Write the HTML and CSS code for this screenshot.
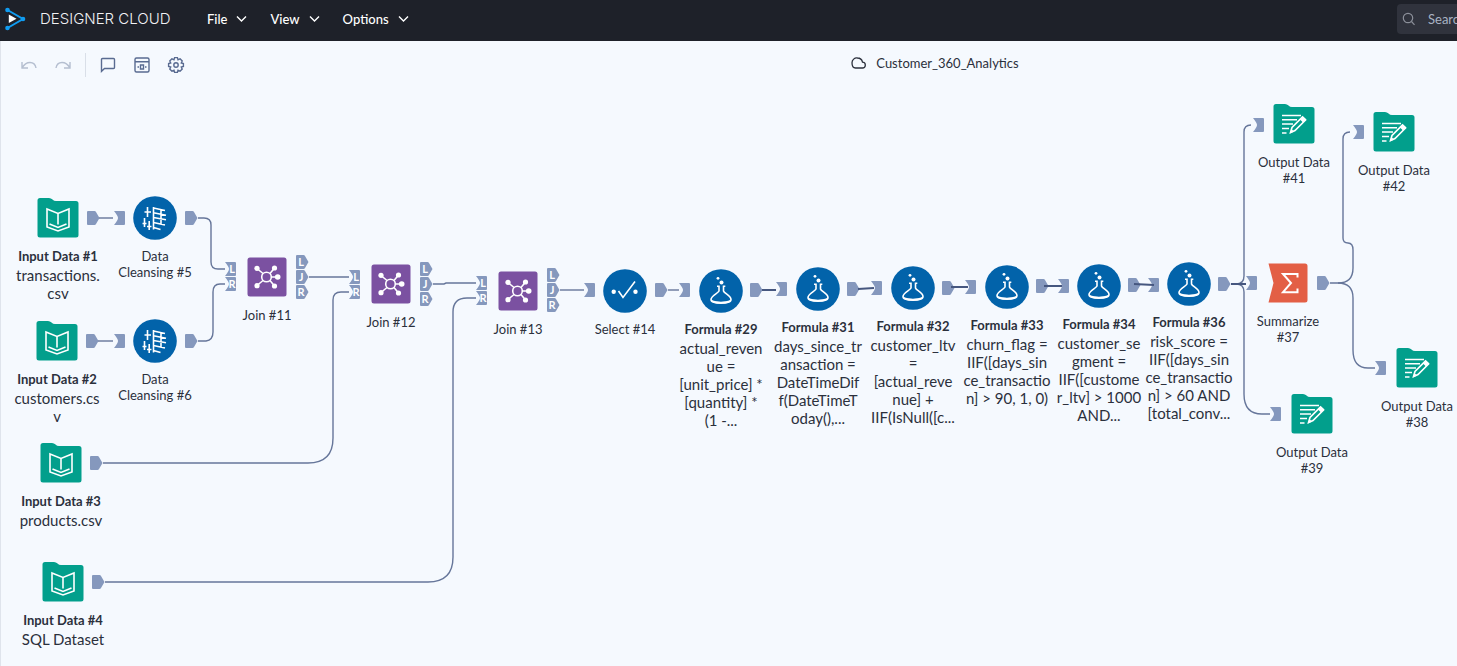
FILE: index.html
```html
<!DOCTYPE html>
<html lang="en">
<head>
<meta charset="utf-8">
<title>Customer_360_Analytics - Designer Cloud</title>
<link rel="stylesheet" href="styles.css">
</head>
<body>
<svg class="defs" aria-hidden="true">
  <defs>
    <path id="chev" d="M1 1.500L5.500 6L10 1.500"/>
    <path id="po" d="M1 -7H7.500Q8.500 -7 9 -6L12.500 0L9 6Q8.500 7 7.500 7H1Q0 7 0 6V-6Q0 -7 1 -7Z"/>
    <path id="pi" d="M0 -7H10Q11 -7 11 -6V6Q11 7 10 7H0Q4 2 4 0Q4 -2 0 -7Z"/>
    <symbol id="input" viewBox="-22 -22 44 44">
      <path class="teal" d="M-18 -20H-9Q-7 -20 -5.500 -18.500Q-4 -17 -2 -17H18Q20.500 -17 20.500 -14.500V17Q20.500 19.500 18 19.500H-18Q-20.500 19.500 -20.500 17V-17.500Q-20.500 -20 -18 -20Z"/>
      <path class="ink" d="M-11 -9L0 -4.500L11 -9V9L0 13L-11 9ZM0 -4.500V6.500M-8.500 6L0 9.500L8.500 6"/>
    </symbol>
    <symbol id="output" viewBox="-22 -22 44 44">
      <path class="teal" d="M-18 -20H-9Q-7 -20 -5.500 -18.500Q-4 -17 -2 -17H18Q20.500 -17 20.500 -14.500V17Q20.500 19.500 18 19.500H-18Q-20.500 19.500 -20.500 17V-17.500Q-20.500 -20 -18 -20Z"/>
      <path class="ink" d="M-12 -8.500H7M-12 -4.300H3M-12 0H-1M-12 4.500H-5M-12 9H-7.500"/>
      <path class="ink" d="M-3.500 8.500L-2 3.500L8.500 -7L11.500 -4L1 6.500Z"/>
      <path class="white" d="M6 -4.500L9 -7.500L12.500 -4.500L9 -1.500ZM-4 9.500L-2.700 5L0 7.500Z"/>
    </symbol>
    <symbol id="clean" viewBox="-22 -22 44 44">
      <circle class="blue" r="21.800"/>
      <path class="ink" d="M-7.500 -11V-1M-10.500 -6H-4M-10.500 0V9M-12.500 5.500H-8.500M-5.800 3V12M-8 8.500H-3.500M-1.500 -11V11.500M6 -8V6.500M-1.500 -10L10 -7.500M-1.500 -5.200L11 -2.800M-1.500 -.5L11 1.800M-1.500 4.500L10 7M-1.500 9.500L5.500 11.500"/>
    </symbol>
    <symbol id="join" viewBox="-22 -22 44 44">
      <rect class="purple" x="-19.500" y="-19.500" width="39" height="39" rx="2.500"/>
      <path class="ink" d="M-4 -3.500L-10 -8.500M3 -3.500L7.500 -9M4 0H10.500M3 3.500L7.500 9M-4 3.500L-10 8.500"/>
      <circle class="ink" cx="-.5" r="4.800"/>
      <g class="white"><circle cx="-10" cy="-8.700" r="2.600"/><circle cx="7.500" cy="-9" r="2.600"/><circle cx="10.700" r="2.800"/><circle cx="7.500" cy="9" r="2.600"/><circle cx="-10" cy="8.700" r="2.600"/></g>
    </symbol>
    <symbol id="select" viewBox="-22 -22 44 44">
      <circle class="blue" r="21.800"/>
      <path class="ink" d="M-6.500 0L-2 6.500L10 -9.500"/>
      <g class="white"><circle cx="-11.300" cy=".7" r="2.200"/><circle cx="10.500" cy=".7" r="2.200"/></g>
    </symbol>
    <symbol id="formula" viewBox="-22 -22 44 44">
      <circle class="blue" r="21.800"/>
      <path class="ink" d="M-4 -4.800H-2V0C-3 2.200 -10 4.800 -10 8.500C-10 11.500 -6 11.800 0 11.800S10 11.500 10 8.500C10 4.800 3 2.200 2.500 0V-4.800H4.300"/>
      <path class="white" d="M-10 9Q0 12.500 10 9Q9 13 0 13T-10 9Z"/>
      <g class="white"><circle cx="-3" cy="-12.700" r="1.400"/><circle cx=".5" cy="-8.400" r="2"/></g>
    </symbol>
    <symbol id="sum" viewBox="-22 -22 44 44">
      <path class="orange" d="M-19.500 -19.500H17Q19.500 -19.500 19.500 -17V17Q19.500 19.500 17 19.500H-19.500L-14.500 0Z"/>
      <path class="sigma" d="M9.500 -5.500V-9H-5L3 0L-5 9.200H9.500V5.500"/>
    </symbol>
  </defs>
</svg>

<header class="topbar">
  <a class="brand" href="#">
    <svg width="22" height="24" viewBox="0 0 22 24" aria-hidden="true">
      <path d="M3.500 3L19 12L3.500 21" fill="none" stroke="#109cf1" stroke-width="2"/>
      <g fill="#109cf1"><circle cx="3.500" cy="3" r="2.300"/><circle cx="19" cy="12" r="2.300"/><circle cx="3.500" cy="21" r="2.300"/></g>
      <path d="M4.800 7.500L12.500 11.800L4.800 16Z" fill="#fff"/>
    </svg>
    <span>DESIGNER CLOUD</span>
  </a>
  <nav class="menus">
    <button class="menu">File <svg width="11" height="8"><use href="#chev"/></svg></button>
    <button class="menu">View <svg width="11" height="8"><use href="#chev"/></svg></button>
    <button class="menu">Options <svg width="11" height="8"><use href="#chev"/></svg></button>
  </nav>
  <label class="search">
    <svg width="14" height="14" viewBox="0 0 14 14" aria-hidden="true"><circle cx="6" cy="6" r="4.700"/><path d="M9.500 9.500L12.500 12.800"/></svg>
    <input type="text" placeholder="Search" aria-label="Search">
  </label>
</header>

<main class="workspace">
  <div class="toolbar">
    <div class="tools">
      <button class="tool off" aria-label="Undo"><svg width="18" height="18" viewBox="0 0 18 18"><path d="M2 6V12H8M2 12C4 8.500 7 6.500 10 6.500C13.500 6.500 15.500 9 16 12"/></svg></button>
      <button class="tool off" aria-label="Redo"><svg width="18" height="18" viewBox="0 0 18 18"><path d="M16 6V12H10M16 12C14 8.500 11 6.500 8 6.500C4.500 6.500 2.500 9 2 12"/></svg></button>
      <span class="rule"></span>
      <button class="tool" aria-label="Comment"><svg width="18" height="18" viewBox="0 0 18 18"><path d="M3.500 2.500H14.500Q15.500 2.500 15.500 3.500V11.500Q15.500 12.500 14.500 12.500H5.500L2.500 15.300V3.500Q2.500 2.500 3.500 2.500Z"/></svg></button>
      <button class="tool" aria-label="Interface designer"><svg width="18" height="18" viewBox="0 0 18 18"><rect x="2" y="2" width="14" height="14" rx="1.500"/><path d="M2 5.800H16M7.500 9H10.500V13H7.500ZM4.500 11H6M12 11H13.500"/></svg></button>
      <button class="tool" aria-label="Settings"><svg width="18" height="18" viewBox="0 0 18 18"><circle cx="9" cy="9" r="2.200"/><path d="M7.600 1.600H10.400L11 3.700L13.100 2.800L15.200 4.900L14.300 7L16.400 7.600V10.400L14.300 11L15.200 13.100L13.100 15.200L11 14.300L10.400 16.400H7.600L7 14.300L4.900 15.200L2.800 13.100L3.700 11L1.600 10.400V7.600L3.700 7L2.800 4.900L4.900 2.800L7 3.700Z"/></svg></button>
    </div>
    <div class="title">
      <svg width="15" height="12" viewBox="0 0 15 12" aria-hidden="true"><path d="M4.500 11H11.200A2.900 2.900 0 0 0 11.500 5.100C11 2.800 9 1 6.500 1A4.800 4.800 0 0 0 1 5.800C1 8.700 2.300 11 4.500 11Z"/></svg>
      <span>Customer_360_Analytics</span>
    </div>
  </div>

  <div class="canvas">
    <svg class="graph" aria-hidden="true">
      <g class="ports">
        <use href="#po" x="87" y="218"/><use href="#pi" x="114" y="218"/><use href="#po" x="185" y="218"/>
        <use href="#po" x="86" y="341"/><use href="#pi" x="114" y="341"/><use href="#po" x="185" y="341"/>
        <use href="#po" x="90" y="463"/><use href="#po" x="92" y="582"/>
        <use href="#pi" x="225" y="269"/><use href="#pi" x="225" y="284"/>
        <use href="#po" x="296" y="262"/><use href="#po" x="296" y="277"/><use href="#po" x="296" y="292"/>
        <use href="#pi" x="349" y="277"/><use href="#pi" x="349" y="292"/>
        <use href="#po" x="420" y="269"/><use href="#po" x="420" y="284"/><use href="#po" x="420" y="299"/>
        <use href="#pi" x="476" y="283"/><use href="#pi" x="476" y="298"/>
        <use href="#po" x="547" y="275"/><use href="#po" x="547" y="290"/><use href="#po" x="547" y="305"/>
        <use href="#pi" x="584" y="290"/><use href="#po" x="655" y="290"/>
        <use href="#pi" x="679" y="290"/><use href="#po" x="750" y="290"/>
        <use href="#pi" x="776" y="289"/><use href="#po" x="847" y="289"/>
        <use href="#pi" x="871" y="288"/><use href="#po" x="942" y="288"/>
        <use href="#pi" x="965" y="287"/><use href="#po" x="1036" y="286"/>
        <use href="#pi" x="1058" y="286"/><use href="#po" x="1128" y="285"/>
        <use href="#pi" x="1148" y="285"/><use href="#po" x="1218" y="284"/>
        <use href="#pi" x="1246" y="283"/><use href="#po" x="1317" y="283"/>
        <use href="#pi" x="1253" y="125"/><use href="#pi" x="1353" y="132"/>
        <use href="#pi" x="1375" y="368"/><use href="#pi" x="1270" y="414"/>
      </g>
      <g class="wires">
        <path d="M99 218H113"/><path d="M98 341H113"/>
        <path d="M198 218H204Q211 218 211 225V262Q211 269 218 269H225"/>
        <path d="M198 341H206Q213 340 213 332V292Q213 284 220 284H225"/>
        <path d="M103 463H308Q333 463 333 438V300Q333 292 341 292H349"/>
        <path d="M105 582H428Q453 582 453 557V312Q453 298 467 298H476"/>
        <path d="M309 277H349"/><path d="M433 284H444L446 283H476"/>
        <path d="M560 290H584"/><path d="M668 290H679"/>
        <path d="M1244 276Q1244 284 1236 284M1244 276V132Q1244 125 1251 125"/>
        <path d="M1236 284Q1244 284 1244 292V394Q1244 414 1262 414H1270"/>
        <path d="M1330 283H1338Q1353 283 1353 268V250Q1353 243 1348 243Q1343 243 1343 238V139Q1343 132 1350 132"/>
        <path d="M1338 283Q1353 283 1353 298V350Q1353 368 1368 368H1375"/>
      </g>
      <g class="wires strong">
        <path d="M762 290L776 290"/><path d="M858 289L874 288"/><path d="M951 287L968 287"/>
        <path d="M1044 286L1062 286"/><path d="M1134 284L1154 285"/><path d="M1231 284L1246 284"/>
      </g>
      <g class="letters">
        <text x="232" y="273">L</text><text x="232" y="288">R</text>
        <text x="301" y="266">L</text><text x="301" y="281">J</text><text x="301" y="296">R</text>
        <text x="356" y="281">L</text><text x="356" y="296">R</text>
        <text x="425" y="273">L</text><text x="425" y="288">J</text><text x="425" y="303">R</text>
        <text x="483" y="287">L</text><text x="483" y="302">R</text>
        <text x="552" y="279">L</text><text x="552" y="294">J</text><text x="552" y="309">R</text>
      </g>
    </svg>

    <div class="node in1"><svg><use href="#input"/></svg><b>Input Data #1</b><p>transactions.<br>csv</p></div>
    <div class="node in2"><svg><use href="#input"/></svg><b>Input Data #2</b><p>customers.cs<br>v</p></div>
    <div class="node in3"><svg><use href="#input"/></svg><b>Input Data #3</b><p>products.csv</p></div>
    <div class="node in4"><svg><use href="#input"/></svg><b>Input Data #4</b><p>SQL Dataset</p></div>
    <div class="node clean5"><svg><use href="#clean"/></svg><span>Data<br>Cleansing #5</span></div>
    <div class="node clean6"><svg><use href="#clean"/></svg><span>Data<br>Cleansing #6</span></div>
    <div class="node join11"><svg><use href="#join"/></svg><span>Join #11</span></div>
    <div class="node join12"><svg><use href="#join"/></svg><span>Join #12</span></div>
    <div class="node join13"><svg><use href="#join"/></svg><span>Join #13</span></div>
    <div class="node select14"><svg><use href="#select"/></svg><span>Select #14</span></div>
    <div class="node f29"><svg><use href="#formula"/></svg><b>Formula #29</b><p>actual_reven<br>ue =<br>[unit_price] *<br>[quantity] *<br>(1 -...</p></div>
    <div class="node f31"><svg><use href="#formula"/></svg><b>Formula #31</b><p>days_since_tr<br>ansaction =<br>DateTimeDif<br>f(DateTimeT<br>oday(),...</p></div>
    <div class="node f32"><svg><use href="#formula"/></svg><b>Formula #32</b><p>customer_ltv<br>=<br>[actual_reve<br>nue] +<br>IIF(IsNull([c...</p></div>
    <div class="node f33"><svg><use href="#formula"/></svg><b>Formula #33</b><p>churn_flag =<br>IIF([days_sin<br>ce_transactio<br>n] &gt; 90, 1, 0)</p></div>
    <div class="node f34"><svg><use href="#formula"/></svg><b>Formula #34</b><p>customer_se<br>gment =<br>IIF([custome<br>r_ltv] &gt; 1000<br>AND...</p></div>
    <div class="node f36"><svg><use href="#formula"/></svg><b>Formula #36</b><p>risk_score =<br>IIF([days_sin<br>ce_transactio<br>n] &gt; 60 AND<br>[total_conv...</p></div>
    <div class="node sum37"><svg><use href="#sum"/></svg><span>Summarize<br>#37</span></div>
    <div class="node out41"><svg><use href="#output"/></svg><span>Output Data<br>#41</span></div>
    <div class="node out42"><svg><use href="#output"/></svg><span>Output Data<br>#42</span></div>
    <div class="node out38"><svg><use href="#output"/></svg><span>Output Data<br>#38</span></div>
    <div class="node out39"><svg><use href="#output"/></svg><span>Output Data<br>#39</span></div>
  </div>
</main>
</body>
</html>
```
FILE: styles.css
```css
* { box-sizing: border-box; }
body {
  margin: 0;
  min-height: 100vh;
  display: flex;
  flex-direction: column;
  position: relative;
  overflow: hidden;
  background: #f5f9fe;
  color: #2b303c;
  font-family: Lato, "Liberation Sans", sans-serif;
  font-size: 13px;
}
button { border: 0; padding: 0; background: none; color: inherit; font: inherit; cursor: pointer; }
.defs { position: absolute; width: 0; height: 0; }

/* Top bar */
.topbar { display: flex; align-items: center; height: 41px; padding: 0 0 4px 4px; background: #1e2129; color: #fff; }
.brand { display: flex; align-items: center; gap: 14px; width: 203px; color: #f1f2f4; font-family: Inter, sans-serif; font-size: 15px; font-weight: 300; text-decoration: none; white-space: nowrap; }
.menus { display: flex; gap: 23px; }
.menu { display: flex; align-items: center; gap: 9px; line-height: 20px; font-weight: 500; }
.menu svg { fill: none; stroke: #fff; stroke-width: 1.4; }
.search { display: flex; align-items: center; gap: 12px; width: 60px; height: 30px; margin-left: auto; padding-left: 5px; border-radius: 4px 0 0 4px; background: #30333d; overflow: hidden; }
.search svg { flex: none; fill: none; stroke: #8b8f99; stroke-width: 1.2; }
.search input { flex: none; width: 180px; border: 0; padding: 0; outline: 0; background: none; color: #fff; font: inherit; }
.search input::placeholder { color: #a9b2c3; opacity: 1; }

/* Toolbar */
.workspace { flex: 1; border-left: 1px solid #dfe4ec; }
.toolbar { display: grid; grid-template-columns: 58.4% 1fr; align-items: center; height: 48px; }
.tools { display: flex; align-items: center; gap: 6px; padding-left: 14px; }
.tool { display: grid; place-items: center; width: 28px; height: 28px; }
.tool svg { fill: none; stroke: #596b91; stroke-width: 1.4; }
.tool.off svg { stroke: #b5bfd0; }
.rule { width: 1px; height: 24px; margin: 0 2px; background: #d9dfe8; }
.title { display: flex; align-items: center; gap: 10px; padding-bottom: 4px; }
.title svg { fill: none; stroke: #2b303c; stroke-width: 1.3; }

/* Workflow canvas */
.canvas, .graph { position: absolute; left: 0; top: 0; }
.graph { width: 100vw; height: 100vh; }
.canvas { pointer-events: none; }
.ports { fill: #8598bd; }
.wires { fill: none; stroke: #66769a; stroke-width: 1.4; }
.wires.strong { stroke: #46577f; stroke-width: 2; }
.letters { fill: #fff; font: bold 11px Lato, sans-serif; text-anchor: middle; }

.node { position: absolute; width: 92px; margin: -22px 0 0 -46px; text-align: center; white-space: nowrap; line-height: 16px; }
.node svg { display: block; width: 44px; height: 44px; margin: 0 auto 8px; }
.node b, .node span { display: block; }
.node p { margin: 2px 0 0; font-size: 15px; line-height: 18px; }

.teal { fill: #029f8c; }
.blue { fill: #0263aa; }
.purple { fill: #7b51a1; }
.orange { fill: #e35f45; }
.white { fill: #fff; }
.ink { fill: none; stroke: #fff; stroke-width: 1.6; }
.sigma { fill: none; stroke: #fff; stroke-width: 2; }

.in1 { left: 58px; top: 218px; }
.in2 { left: 57px; top: 341px; }
.in3 { left: 61px; top: 463px; }
.in4 { left: 63px; top: 582px; }
.clean5 { left: 155px; top: 218px; }
.clean6 { left: 155px; top: 341px; }
.join11 { left: 267px; top: 277px; }
.join12 { left: 391px; top: 284px; }
.join13 { left: 518px; top: 291px; }
.select14 { left: 625px; top: 291px; }
.f29 { left: 721px; top: 291px; }
.f31 { left: 818px; top: 289px; }
.f32 { left: 913px; top: 288px; }
.f33 { left: 1007px; top: 287px; }
.f34 { left: 1099px; top: 286px; }
.f36 { left: 1189px; top: 284px; }
.sum37 { left: 1288px; top: 283px; }
.out41 { left: 1294px; top: 124px; }
.out42 { left: 1394px; top: 132px; }
.out38 { left: 1417px; top: 368px; }
.out39 { left: 1312px; top: 414px; }
```
